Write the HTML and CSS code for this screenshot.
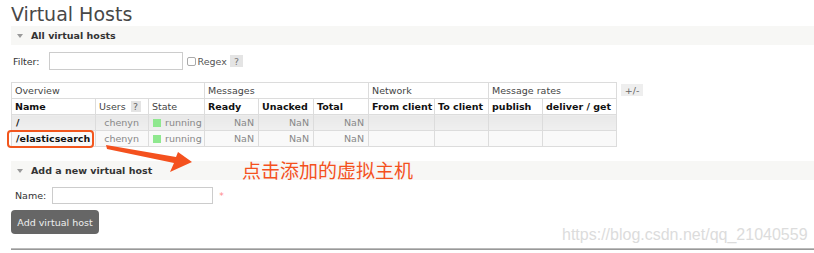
FILE: index.html
```html
<!DOCTYPE html>
<html>
<head>
<meta charset="utf-8">
<link rel="stylesheet" href="styles.css">
</head>
<body>
<div class="page">
  <h1 class="title">Virtual Hosts</h1>
  <div class="sec-head"><span class="tri"></span>All virtual hosts</div>
  <div class="filter-row">
    <span class="lbl">Filter:</span>
    <span class="input filter-input"></span>
    <span class="cb"></span>
    <span class="regex">Regex</span>
    <span class="help">?</span>
  </div>
  <div class="table-row">
    <table class="list">
      <colgroup>
        <col class="c1"><col class="c2"><col class="c3"><col class="c4"><col class="c5"><col class="c6"><col class="c7"><col class="c8"><col class="c9"><col class="c10">
      </colgroup>
      <thead>
        <tr class="group">
          <th colspan="3">Overview</th>
          <th colspan="3">Messages</th>
          <th colspan="2">Network</th>
          <th colspan="2">Message rates</th>
        </tr>
        <tr class="heads">
          <th>Name</th>
          <th class="norm">Users <span class="qhelp">?</span></th>
          <th class="norm">State</th>
          <th>Ready</th>
          <th>Unacked</th>
          <th>Total</th>
          <th>From client</th>
          <th>To client</th>
          <th>publish</th>
          <th>deliver / get</th>
        </tr>
      </thead>
      <tbody>
        <tr class="alt1">
          <td class="name">/</td>
          <td class="user">chenyn</td>
          <td class="state"><span class="dot"></span>running</td>
          <td class="num">NaN</td>
          <td class="num">NaN</td>
          <td class="num">NaN</td>
          <td></td><td></td><td></td><td></td>
        </tr>
        <tr class="alt2">
          <td class="name">/elasticsearch</td>
          <td class="user">chenyn</td>
          <td class="state"><span class="dot"></span>running</td>
          <td class="num">NaN</td>
          <td class="num">NaN</td>
          <td class="num">NaN</td>
          <td></td><td></td><td></td><td></td>
        </tr>
      </tbody>
    </table>
    <span class="plusminus">+/-</span>
  </div>
  <div class="sec-head sec2"><span class="tri"></span>Add a new virtual host</div>
  <div class="name-row">
    <span class="lbl name-lbl">Name:</span>
    <span class="input name-input"></span>
    <span class="req">*</span>
  </div>
  <div class="btn">Add virtual host</div>
  <div class="rule"></div>

  <div class="mark-box"></div>
  <svg class="arrow" width="814" height="253" viewBox="0 0 814 253">
    <polygon points="106,145 176,157 178,152 192,162 170,172 174,163 107,149" fill="#f4511e"/>
  </svg>
  <div class="note">点击添加的虚拟主机</div>
  <div class="watermark">https://blog.csdn.net/qq_21040559</div>
</div>
</body>
</html>
```

FILE: styles.css
```css
html, body {
  margin: 0;
  padding: 0;
  background: #fff;
}
.page {
  position: relative;
  width: 814px;
  height: 253px;
  padding-left: 11px;
  box-sizing: border-box;
  font-family: "DejaVu Sans", Verdana, sans-serif;
  font-size: 9.5px;
  color: #333;
  overflow: hidden;
}
.title {
  margin: 0;
  padding-top: 3px;
  font-size: 19px;
  line-height: 22px;
  font-weight: normal;
  color: #484848;
}
.sec-head {
  margin-top: 1px;
  height: 19px;
  background: #f7f7f5;
  display: flex;
  align-items: center;
  font-weight: bold;
  color: #333;
}
.tri {
  width: 0;
  height: 0;
  border-left: 3.5px solid transparent;
  border-right: 3.5px solid transparent;
  border-top: 4px solid #9a9a9a;
  margin-left: 6px;
  margin-right: 8px;
}
.filter-row {
  margin-top: 7px;
  height: 18px;
  display: flex;
  align-items: center;
}
.lbl {
  margin-left: 2px;
}
.input {
  display: block;
  box-sizing: border-box;
  border: 1px solid #ccc;
  background: #fff;
}
.filter-input {
  width: 134px;
  height: 18px;
  margin-left: 9px;
}
.cb {
  width: 7px;
  height: 7px;
  border: 1px solid #aaa;
  border-radius: 2px;
  margin-left: 4px;
  background: #fff;
}
.regex {
  margin-left: 2px;
  color: #555;
}
.help {
  margin-left: 3px;
  width: 13px;
  height: 12px;
  background: #e4e4e4;
  color: #777;
  display: flex;
  align-items: center;
  justify-content: center;
}
.table-row {
  margin-top: 12px;
  display: flex;
  align-items: flex-start;
}
.list {
  border-collapse: collapse;
  table-layout: fixed;
  width: 605px;
}
.c1 { width: 84px; }
.c2 { width: 53px; }
.c3 { width: 56px; }
.c4 { width: 54px; }
.c5 { width: 55px; }
.c6 { width: 55px; }
.c7 { width: 66px; }
.c8 { width: 54px; }
.c9 { width: 54px; }
.c10 { width: 74px; }
.list th, .list td {
  border: 1px solid #dcdcdc;
  height: 15px;
  padding: 0 3px;
  white-space: nowrap;
  overflow: hidden;
}
.list th {
  text-align: left;
  background: #fff;
  color: #111;
}
.group th {
  font-weight: normal;
  color: #444;
}
.heads th {
  font-weight: bold;
}
.heads th.norm {
  font-weight: normal;
  color: #444;
}
.qhelp {
  display: inline-block;
  width: 10px;
  height: 11px;
  line-height: 11px;
  text-align: center;
  background: #e4e4e4;
  color: #666;
  margin-left: 2px;
}
.alt1 td {
  background: linear-gradient(#e8e8e8, #f0f0f0);
}
.alt2 td {
  background: #f9f9f9;
}
.list td.name {
  font-weight: bold;
  color: #111;
  padding-left: 4px;
}
.list td.user {
  text-align: right;
  color: #888;
  padding-right: 9px;
}
.list td.state {
  color: #888;
  padding-left: 4px;
}
.dot {
  display: inline-block;
  width: 8px;
  height: 8px;
  background: #8fe88f;
  margin-right: 4px;
  vertical-align: -1px;
}
.list td.num {
  text-align: right;
  color: #888;
  padding-right: 4px;
}
.plusminus {
  margin-left: 4px;
  margin-top: 2px;
  width: 22px;
  height: 12px;
  background: #eee;
  color: #666;
  display: flex;
  align-items: center;
  justify-content: center;
}
.sec2 {
  margin-top: 14px;
}
.name-row {
  margin-top: 7px;
  height: 17px;
  display: flex;
  align-items: center;
}
.name-lbl {
  margin-left: 4px;
}
.name-input {
  width: 161px;
  height: 17px;
  margin-left: 6px;
}
.req {
  color: #f88;
  margin-left: 6px;
  font-size: 9px;
}
.btn {
  margin-top: 6px;
  width: 88px;
  height: 24px;
  border-radius: 4px;
  background: #666;
  color: #eee;
  display: flex;
  align-items: center;
  justify-content: center;
}
.rule {
  margin-top: 14px;
  height: 1px;
  background: #999;
  border-top: 1px solid #bbb;
}
.mark-box {
  position: absolute;
  left: 7px;
  top: 130px;
  width: 87px;
  height: 18px;
  box-sizing: border-box;
  border: 2px solid #f2561d;
  border-radius: 4px;
}
.arrow {
  position: absolute;
  left: 0;
  top: 0;
}
.note {
  position: absolute;
  left: 242px;
  top: 157px;
  font-family: "Noto Sans CJK SC", sans-serif;
  font-size: 19px;
  line-height: 26px;
  color: #f4511e;
}
.watermark {
  position: absolute;
  left: 562px;
  top: 225px;
  font-family: "Liberation Sans", Arial, sans-serif;
  font-size: 16px;
  line-height: 20px;
  color: #dcdcdc;
}
```
